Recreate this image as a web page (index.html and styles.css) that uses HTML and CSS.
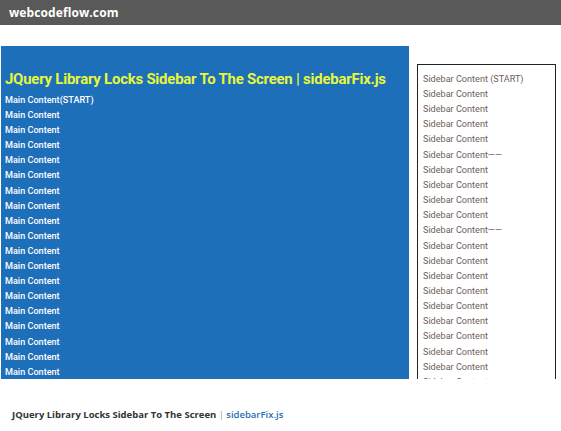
FILE: index.html
```html
<!DOCTYPE html>
<html>
<head>
<meta charset="utf-8">
<link rel="stylesheet" href="styles.css">
</head>
<body>
<header class="topbar"><span class="brand">webcodeflow.com</span></header>
<div class="frame">
  <main class="main">
    <h1 class="title">JQuery Library Locks Sidebar To The Screen | sidebarFix.js</h1>
    <p class="item">Main Content(START)</p>
    <p class="item">Main Content</p>
    <p class="item">Main Content</p>
    <p class="item">Main Content</p>
    <p class="item">Main Content</p>
    <p class="item">Main Content</p>
    <p class="item">Main Content</p>
    <p class="item">Main Content</p>
    <p class="item">Main Content</p>
    <p class="item">Main Content</p>
    <p class="item">Main Content</p>
    <p class="item">Main Content</p>
    <p class="item">Main Content</p>
    <p class="item">Main Content</p>
    <p class="item">Main Content</p>
    <p class="item">Main Content</p>
    <p class="item">Main Content</p>
    <p class="item">Main Content</p>
    <p class="item">Main Content</p>
  </main>
  <aside class="sidebar">
    <p class="side-item">Sidebar Content (START)</p>
    <p class="side-item">Sidebar Content</p>
    <p class="side-item">Sidebar Content</p>
    <p class="side-item">Sidebar Content</p>
    <p class="side-item">Sidebar Content</p>
    <p class="side-item">Sidebar Content——</p>
    <p class="side-item">Sidebar Content</p>
    <p class="side-item">Sidebar Content</p>
    <p class="side-item">Sidebar Content</p>
    <p class="side-item">Sidebar Content</p>
    <p class="side-item">Sidebar Content——</p>
    <p class="side-item">Sidebar Content</p>
    <p class="side-item">Sidebar Content</p>
    <p class="side-item">Sidebar Content</p>
    <p class="side-item">Sidebar Content</p>
    <p class="side-item">Sidebar Content</p>
    <p class="side-item">Sidebar Content</p>
    <p class="side-item">Sidebar Content</p>
    <p class="side-item">Sidebar Content</p>
    <p class="side-item">Sidebar Content</p>
    <p class="side-item">Sidebar Content</p>
  </aside>
</div>
<footer class="caption">
  <span class="caption-title">JQuery Library Locks Sidebar To The Screen</span>
  <span class="caption-sep">|</span>
  <span class="caption-link">sidebarFix.js</span>
</footer>
</body>
</html>
```
FILE: styles.css
```css
* { box-sizing: border-box; }
html, body { margin: 0; padding: 0; background: #fff; }
body { width: 561px; height: 431px; overflow: hidden; font-family: Roboto, "Liberation Sans", sans-serif; }

.topbar {
  height: 25px;
  background: #595959;
  display: flex;
  align-items: center;
  padding-left: 9px;
}
.brand {
  color: #fff;
  font-family: "Open Sans", "Liberation Sans", sans-serif;
  font-weight: 700;
  font-size: 12px;
  letter-spacing: 0.1px;
}

.frame {
  display: flex;
  align-items: flex-start;
  margin-top: 21px;
  height: 333px;
  overflow: hidden;
  padding-left: 1px;
}

.main {
  width: 408px;
  height: 333px;
  background: #1e6fba;
  padding: 21px 4px 0;
  flex: none;
}
.title {
  margin: 0 0 2px;
  color: #e9f73a;
  font-size: 14.9px;
  font-weight: 700;
  line-height: 24px;
  letter-spacing: -0.2px;
  white-space: nowrap;
}
.item {
  margin: 0;
  color: #fff;
  font-size: 9.1px;
  font-weight: 500;
  line-height: 15.1px;
}

.sidebar {
  margin-left: 8px;
  margin-top: 18px;
  width: 139px;
  height: 400px;
  border: 1px solid #222;
  padding: 6.8px 5px 0;
  flex: none;
}
.side-item {
  margin: 0;
  color: #6e6057;
  font-size: 9.1px;
  line-height: 15.15px;
}

.caption {
  padding: 29px 0 0 12px;
  font-size: 9.5px;
  line-height: 14px;
}
.caption-title {
  font-family: "Open Sans", "Liberation Sans", sans-serif;
  font-weight: 700;
  color: #333;
}
.caption-sep { color: #999; font-family: "Open Sans", sans-serif; }
.caption-link { color: #2b6db4; font-family: "Open Sans", sans-serif; font-weight: 600; }
```
